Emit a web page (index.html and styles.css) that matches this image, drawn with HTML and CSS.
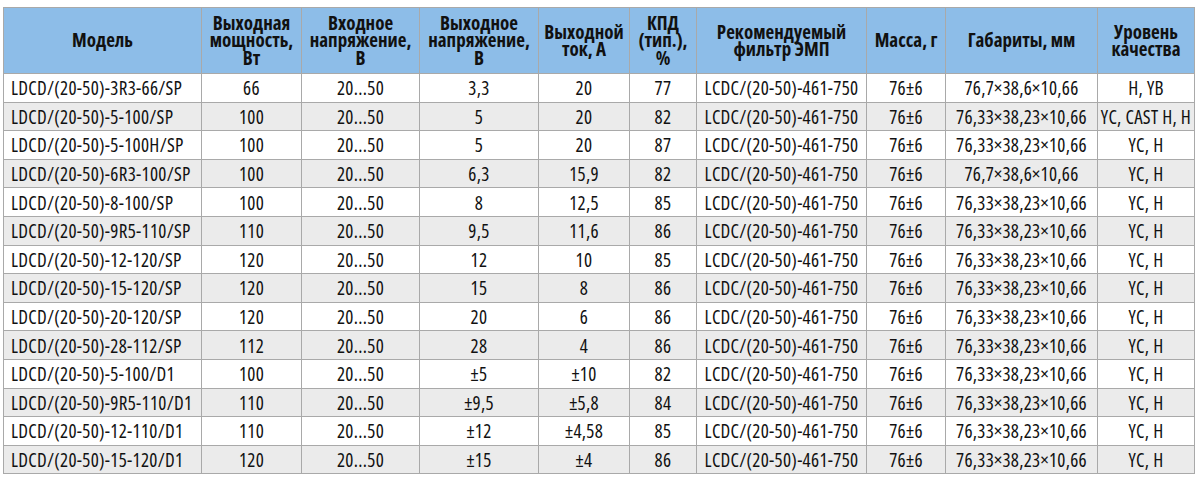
FILE: index.html
```html
<!DOCTYPE html>
<html lang="ru">
<head>
<meta charset="utf-8">
<link rel="stylesheet" href="styles.css">
</head>
<body>
<table class="spec">
<colgroup>
<col class="c1"><col class="c2"><col class="c3"><col class="c4"><col class="c5"><col class="c6"><col class="c7"><col class="c8"><col class="c9"><col class="c10">
</colgroup>
<thead>
<tr>
<th>Модель</th>
<th>Выходная<br>мощность,<br>Вт</th>
<th>Входное<br>напряжение,<br>В</th>
<th>Выходное<br>напряжение,<br>В</th>
<th>Выходной<br>ток, А</th>
<th>КПД<br>(тип.),<br>%</th>
<th>Рекомендуемый<br>фильтр ЭМП</th>
<th>Масса, г</th>
<th>Габариты, мм</th>
<th>Уровень<br>качества</th>
</tr>
</thead>
<tbody>
<tr><td>LDCD/(20-50)-3R3-66/SP</td><td>66</td><td>20...50</td><td>3,3</td><td>20</td><td>77</td><td>LCDC/(20-50)-461-750</td><td>76±6</td><td>76,7×38,6×10,66</td><td>H, YB</td></tr>
<tr><td>LDCD/(20-50)-5-100/SP</td><td>100</td><td>20...50</td><td>5</td><td>20</td><td>82</td><td>LCDC/(20-50)-461-750</td><td>76±6</td><td>76,33×38,23×10,66</td><td>YC, CAST H, H</td></tr>
<tr><td>LDCD/(20-50)-5-100H/SP</td><td>100</td><td>20...50</td><td>5</td><td>20</td><td>87</td><td>LCDC/(20-50)-461-750</td><td>76±6</td><td>76,33×38,23×10,66</td><td>YC, H</td></tr>
<tr><td>LDCD/(20-50)-6R3-100/SP</td><td>100</td><td>20...50</td><td>6,3</td><td>15,9</td><td>82</td><td>LCDC/(20-50)-461-750</td><td>76±6</td><td>76,7×38,6×10,66</td><td>YC, H</td></tr>
<tr><td>LDCD/(20-50)-8-100/SP</td><td>100</td><td>20...50</td><td>8</td><td>12,5</td><td>85</td><td>LCDC/(20-50)-461-750</td><td>76±6</td><td>76,33×38,23×10,66</td><td>YC, H</td></tr>
<tr><td>LDCD/(20-50)-9R5-110/SP</td><td>110</td><td>20...50</td><td>9,5</td><td>11,6</td><td>86</td><td>LCDC/(20-50)-461-750</td><td>76±6</td><td>76,33×38,23×10,66</td><td>YC, H</td></tr>
<tr><td>LDCD/(20-50)-12-120/SP</td><td>120</td><td>20...50</td><td>12</td><td>10</td><td>85</td><td>LCDC/(20-50)-461-750</td><td>76±6</td><td>76,33×38,23×10,66</td><td>YC, H</td></tr>
<tr><td>LDCD/(20-50)-15-120/SP</td><td>120</td><td>20...50</td><td>15</td><td>8</td><td>86</td><td>LCDC/(20-50)-461-750</td><td>76±6</td><td>76,33×38,23×10,66</td><td>YC, H</td></tr>
<tr><td>LDCD/(20-50)-20-120/SP</td><td>120</td><td>20...50</td><td>20</td><td>6</td><td>86</td><td>LCDC/(20-50)-461-750</td><td>76±6</td><td>76,33×38,23×10,66</td><td>YC, H</td></tr>
<tr><td>LDCD/(20-50)-28-112/SP</td><td>112</td><td>20...50</td><td>28</td><td>4</td><td>86</td><td>LCDC/(20-50)-461-750</td><td>76±6</td><td>76,33×38,23×10,66</td><td>YC, H</td></tr>
<tr><td>LDCD/(20-50)-5-100/D1</td><td>100</td><td>20...50</td><td>±5</td><td>±10</td><td>82</td><td>LCDC/(20-50)-461-750</td><td>76±6</td><td>76,33×38,23×10,66</td><td>YC, H</td></tr>
<tr><td>LDCD/(20-50)-9R5-110/D1</td><td>110</td><td>20...50</td><td>±9,5</td><td>±5,8</td><td>84</td><td>LCDC/(20-50)-461-750</td><td>76±6</td><td>76,33×38,23×10,66</td><td>YC, H</td></tr>
<tr><td>LDCD/(20-50)-12-110/D1</td><td>110</td><td>20...50</td><td>±12</td><td>±4,58</td><td>85</td><td>LCDC/(20-50)-461-750</td><td>76±6</td><td>76,33×38,23×10,66</td><td>YC, H</td></tr>
<tr><td>LDCD/(20-50)-15-120/D1</td><td>120</td><td>20...50</td><td>±15</td><td>±4</td><td>86</td><td>LCDC/(20-50)-461-750</td><td>76±6</td><td>76,33×38,23×10,66</td><td>YC, H</td></tr>
</tbody>
</table>
</body>
</html>
```

FILE: styles.css
```css
html, body {
  margin: 0;
  padding: 0;
  background: #ffffff;
}
body {
  padding: 7px 0 0 3px;
  font-family: "Open Sans", sans-serif;
  font-stretch: 75%;
  color: #111111;
}
.spec {
  border-collapse: collapse;
  table-layout: fixed;
  width: 1191px;
  font-size: 19px;
}
.c1 { width: 198px; }
.c2 { width: 100px; }
.c3 { width: 118px; }
.c4 { width: 119px; }
.c5 { width: 91px; }
.c6 { width: 67px; }
.c7 { width: 170px; }
.c8 { width: 79px; }
.c9 { width: 152px; }
.c10 { width: 97px; }
.spec th, .spec td {
  border: 1px solid #a9a9a9;
  padding: 0;
  text-align: center;
  white-space: nowrap;
  overflow: hidden;
}
.spec thead tr {
  height: 66px;
}
.spec th {
  background: #8dbde8;
  font-weight: bold;
  line-height: 17.5px;
  padding-top: 1px;
}
.spec tbody tr {
  height: 28.6px;
}
.spec td {
  line-height: 20px;
  padding-top: 1px;
  letter-spacing: 0.3px;
}
.spec td:first-child {
  text-align: left;
  padding-left: 7px;
}
.spec tbody tr:nth-child(even) td {
  background: #ebebeb;
}
```
